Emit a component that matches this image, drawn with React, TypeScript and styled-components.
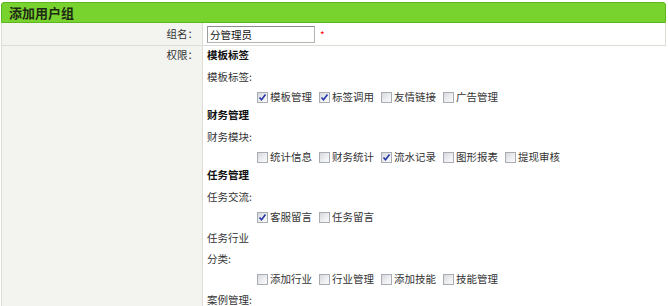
import React from 'react';
import styled, { createGlobalStyle } from 'styled-components';

const GlobalStyle = createGlobalStyle`
  html, body {
    margin: 0;
    padding: 0;
    background: #fff;
  }
  body {
    font-family: "Noto Sans CJK SC", "Liberation Sans", sans-serif;
    font-size: 10.5px;
    color: #333;
  }
`;

type Perm = { name: string; checked?: boolean };
type Group = { title?: string; subs: { label: string; items?: Perm[] }[] };

const groups: Group[] = [
  {
    title: '模板标签',
    subs: [
      {
        label: '模板标签:',
        items: [
          { name: '模板管理', checked: true },
          { name: '标签调用', checked: true },
          { name: '友情链接' },
          { name: '广告管理' },
        ],
      },
    ],
  },
  {
    title: '财务管理',
    subs: [
      {
        label: '财务模块:',
        items: [
          { name: '统计信息' },
          { name: '财务统计' },
          { name: '流水记录', checked: true },
          { name: '图形报表' },
          { name: '提现审核' },
        ],
      },
    ],
  },
  {
    title: '任务管理',
    subs: [
      {
        label: '任务交流:',
        items: [{ name: '客服留言', checked: true }, { name: '任务留言' }],
      },
      { label: '任务行业' },
      {
        label: '分类:',
        items: [
          { name: '添加行业' },
          { name: '行业管理' },
          { name: '添加技能' },
          { name: '技能管理' },
        ],
      },
      { label: '案例管理:' },
    ],
  },
];

const Panel = styled.div`
  width: 665px;
  margin: 2px 0 0 1px;
`;

const Title = styled.h3`
  margin: 0;
  height: 19px;
  line-height: 19px;
  padding-left: 7px;
  background: #78d32f;
  border: 1px solid #5cb61f;
  border-radius: 3px 3px 0 0;
  font-size: 13px;
  font-weight: bold;
  color: #1f2a14;
`;

const Row = styled.div`
  display: grid;
  grid-template-columns: 202px 1fr;
  border-bottom: 1px solid #dedcd4;
`;

const Label = styled.div<{ $top: number }>`
  box-sizing: border-box;
  background: #f3f3f0;
  border-left: 1px solid #dedcd4;
  border-right: 1px solid #dedcd4;
  text-align: right;
  padding: ${(p) => p.$top}px 4px 0 0;
  line-height: 18px;
`;

const Field = styled.div<{ $pad: string }>`
  border-right: 1px solid #dedcd4;
  padding: ${(p) => p.$pad};
  display: flex;
  align-items: center;
  min-height: 22px;
  box-sizing: border-box;
`;

const Tree = styled.div`
  padding: 0 0 20px 4px;
`;

const GroupBlock = styled.div`
  & + & {
    margin-top: 1px;
  }
`;

const Input = styled.input`
  box-sizing: border-box;
  width: 108px;
  height: 17px;
  padding: 0 2px;
  border: 1px solid #b4b4b4;
  border-top-color: #8a8a8a;
  border-left-color: #9c9c9c;
  font: inherit;
  color: #111;
  outline: none;
`;

const Star = styled.span`
  color: #f00;
  margin-left: 5px;
  font-size: 10px;
`;

const Heading = styled.div`
  font-weight: bold;
  color: #111;
  line-height: 18px;
`;

const Sub = styled.div`
  line-height: 17px;
  margin: 4px 0;
`;

const Checks = styled.div`
  display: flex;
  padding-left: 50px;
  line-height: 16px;
`;

const Item = styled.label`
  display: inline-flex;
  align-items: center;
  margin-right: 7px;
  color: #333;
`;

const Box = styled.span`
  box-sizing: border-box;
  width: 11px;
  height: 11px;
  margin-right: 2px;
  border: 1px solid #a9adb3;
  background: linear-gradient(135deg, #d6d8dc 0%, #eef0f2 60%, #fafafa 100%);
  display: inline-flex;
  align-items: center;
  justify-content: center;
`;

const Check = ({ on }: { on?: boolean }) => (
  <Box>
    {on && (
      <svg width="9" height="9" viewBox="0 0 9 9">
        <path d="M1.5 4.5 L3.5 6.8 L7.5 1.5" fill="none" stroke="#2638a8" strokeWidth="1.6" />
      </svg>
    )}
  </Box>
);

export default function App() {
  return (
    <>
      <GlobalStyle />
      <Panel>
        <Title>添加用户组</Title>
        <Row>
          <Label $top={2}>组名：</Label>
          <Field $pad="0 0 0 4px">
            <Input defaultValue="分管理员" />
            <Star>*</Star>
          </Field>
        </Row>
        <Row>
          <Label $top={0}>权限：</Label>
          <Tree>
            {groups.map((g) => (
              <GroupBlock key={g.title}>
                <Heading>{g.title}</Heading>
                {g.subs.map((s) => (
                  <div key={s.label}>
                    <Sub>{s.label}</Sub>
                    {s.items && (
                      <Checks>
                        {s.items.map((it) => (
                          <Item key={it.name}>
                            <Check on={it.checked} />
                            {it.name}
                          </Item>
                        ))}
                      </Checks>
                    )}
                  </div>
                ))}
              </GroupBlock>
            ))}
          </Tree>
        </Row>
      </Panel>
    </>
  );
}
